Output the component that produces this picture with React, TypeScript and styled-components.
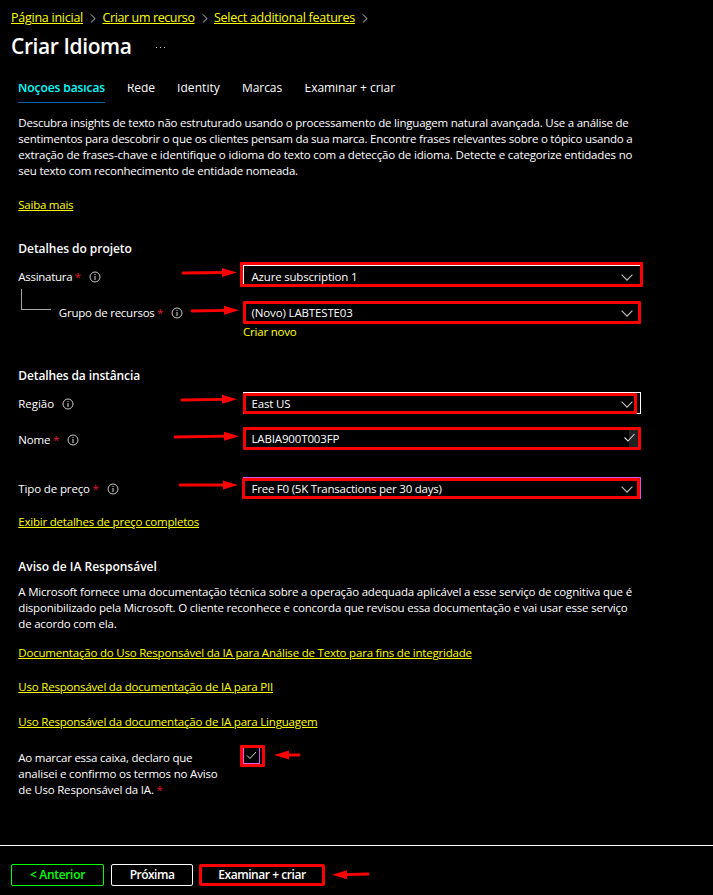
import React from 'react';
import styled, { createGlobalStyle } from 'styled-components';

const RED = '#ff0000';
const YELLOW = '#ffff00';

const GlobalStyle = createGlobalStyle`
  * { box-sizing: border-box; }
  body {
    margin: 0;
    background: #000;
    color: #fff;
    font-family: "Open Sans", "Noto Sans", sans-serif;
    font-size: 11.5px;
    line-height: 16px;
  }
`;

const Page = styled.div`
  width: 713px;
  height: 895px;
  display: flex;
  flex-direction: column;
  background: #000;
  overflow: hidden;
  white-space: nowrap;
`;

const Breadcrumb = styled.nav`
  display: flex;
  align-items: center;
  height: 34px;
  padding: 2px 0 0 11px;
  font-size: 12.5px;
  line-height: 18px;
`;

const Crumb = styled.a<{ $w: number; $ls: number }>`
  width: ${(p) => p.$w}px;
  letter-spacing: ${(p) => p.$ls}px;
  color: ${YELLOW};
  text-decoration: underline;
  text-decoration-thickness: 1px;
  text-underline-offset: 1px;
`;

const CrumbSeparator = styled.svg`
  width: 6px;
  height: 9px;
  margin: 0 6.5px 0 7px;
  flex: none;
`;

const TitleBar = styled.header`
  display: flex;
  height: 50px;
  padding-left: 11px;
`;

const Title = styled.h1`
  margin: -1px 0 0;
  width: 144px;
  font-size: 21px;
  font-weight: 600;
  line-height: 26px;
  letter-spacing: -0.4px;
`;

const More = styled.svg`
  width: 12px;
  height: 3px;
  margin-top: 12px;
`;

const Tabs = styled.div`
  display: flex;
  height: 19px;
  padding-left: 18px;
  overflow: hidden;
  font-size: 12px;
`;

const Tab = styled.div<{ $w: number; $gap: number; $ls: number; $active?: boolean }>`
  width: ${(p) => p.$w}px;
  height: 19px;
  margin-right: ${(p) => p.$gap}px;
  letter-spacing: ${(p) => p.$ls}px;
  font-weight: ${(p) => (p.$active ? 600 : 400)};
  color: ${(p) => (p.$active ? '#00ffff' : '#fff')};
  border-bottom: ${(p) => (p.$active ? '1px solid #0a64ad' : '0')};
`;

const TabText = styled.span`
  display: block;
  margin-top: -4px;
`;

const Main = styled.main`
  display: flex;
  flex-direction: column;
  align-items: flex-start;
  height: 742px;
  padding: 12px 0 0 18.3px;
`;

const Line = styled.div<{ $ls?: number; $mt?: number }>`
  letter-spacing: ${(p) => p.$ls ?? -0.2}px;
  margin-top: ${(p) => p.$mt ?? 0}px;
`;

const Heading = styled.h2<{ $ls?: number; $mt: number }>`
  margin: ${(p) => p.$mt}px 0 0;
  font-size: 12px;
  line-height: 16px;
  font-weight: 600;
  letter-spacing: ${(p) => p.$ls ?? 0}px;
`;

const Link = styled.a<{ $ls?: number; $mt: number }>`
  margin-top: ${(p) => p.$mt}px;
  color: ${YELLOW};
  letter-spacing: ${(p) => p.$ls ?? -0.2}px;
  text-decoration: underline;
  text-decoration-thickness: 1px;
  text-underline-offset: 1px;
`;

const FormRow = styled.div<{ $mt: number }>`
  display: flex;
  height: 22px;
  margin-top: ${(p) => p.$mt}px;
`;

const LabelCell = styled.div<{ $indent?: number; $drop?: number }>`
  position: relative;
  display: flex;
  align-items: flex-start;
  width: 224.7px;
  padding: ${(p) => 4 + (p.$drop ?? 0)}px 0 0 ${(p) => p.$indent ?? 0}px;
`;

const LabelText = styled.label<{ $ls: number }>`
  letter-spacing: ${(p) => p.$ls}px;
`;

const Star = styled.span<{ $gap?: number }>`
  color: #e8182f;
  margin-left: ${(p) => p.$gap ?? 2.5}px;
`;

const InfoSvg = styled.svg`
  width: 12px;
  height: 12px;
  margin: 2px 0 0 8px;
  flex: none;
`;

const Connector = styled.div`
  position: absolute;
  left: 3px;
  top: -12px;
  width: 30px;
  height: 21px;
  border-left: 1px solid #a6a6a6;
  border-bottom: 1px solid #a6a6a6;
`;

const Field = styled.div<{ $line: string }>`
  position: relative;
  display: flex;
  width: 398px;
  height: 22px;
  padding: 3px 0 0 7.5px;
  border: 1px solid ${(p) => p.$line};
`;

const Value = styled.span<{ $ls: number }>`
  flex: 1;
  letter-spacing: ${(p) => p.$ls}px;
`;

const Chevron = styled.svg`
  width: 12px;
  height: 7px;
  margin: 4.5px 7px 0 0;
`;

const ValidMark = styled.svg`
  width: 18px;
  height: 18px;
  margin: -2px 1px 0 0;
`;

const InlineAction = styled.span`
  color: ${YELLOW};
  letter-spacing: -0.2px;
`;

const Highlight = styled.div<{ $t: number; $r: number; $b: number; $l: number }>`
  position: absolute;
  top: ${(p) => p.$t}px;
  right: ${(p) => p.$r}px;
  bottom: ${(p) => p.$b}px;
  left: ${(p) => p.$l}px;
  border: 3px solid ${RED};
  border-radius: 1px;
`;

const ArrowSvg = styled.svg<{ $x: number; $y: number }>`
  position: absolute;
  left: ${(p) => p.$x}px;
  top: ${(p) => p.$y}px;
  overflow: visible;
`;

const ConsentRow = styled.div`
  display: flex;
  margin-top: 20px;
`;

const ConsentText = styled.div`
  width: 225.2px;
`;

const CheckBox = styled.div`
  position: relative;
  width: 17px;
  height: 17px;
  margin-top: -3px;
  border: 1px solid #d65cf0;
  display: flex;
  align-items: center;
  justify-content: center;
`;

const Footer = styled.footer`
  display: flex;
  height: 50px;
  padding: 18px 0 0 11px;
  border-top: 1px solid #fff;
`;

const Button = styled.button<{ $w: number; $color: string; $mr: number; $ls: number; $marked?: boolean }>`
  position: relative;
  width: ${(p) => p.$w}px;
  height: 22px;
  margin-right: ${(p) => p.$mr}px;
  padding: 0;
  background: #000;
  color: ${(p) => (p.$marked ? '#fff' : p.$color)};
  border: ${(p) => (p.$marked ? 3 : 1)}px solid ${(p) => p.$color};
  border-radius: 2px;
  font: 600 12px/14px "Open Sans", sans-serif;
  letter-spacing: ${(p) => p.$ls}px;
`;

const Info = () => (
  <InfoSvg viewBox="0 0 12 12" fill="none" stroke="#c8c8c8">
    <circle cx="6" cy="6" r="5" strokeWidth="1" />
    <path d="M6 5v4M6 3v1" strokeWidth="1.1" />
  </InfoSvg>
);

const Down = () => (
  <Chevron viewBox="0 0 12 7" fill="none" stroke="#c4c4c4" strokeWidth="1.1">
    <path d="M.6.7 6 6.1 11.4.7" />
  </Chevron>
);

const Separator = () => (
  <CrumbSeparator viewBox="0 0 6 9" fill="none" stroke="#c4c4c4" strokeWidth="1">
    <path d="M.8.3 5 4.5.8 8.7" />
  </CrumbSeparator>
);

// Pointer whose shaft runs from the local origin to its tip; flip makes it point left.
const Arrow = ({ x, y, length, rise = 0, flip = false }: { x: number; y: number; length: number; rise?: number; flip?: boolean }) => (
  <ArrowSvg $x={x} $y={y} width="1" height="1">
    <g transform={flip ? 'scale(-1 1)' : undefined}>
      <path d={`M1 0L${length - 13} ${-rise}`} stroke={RED} strokeWidth="2.8" strokeLinecap="round" />
      <path d={`M${length} ${-rise}L${length - 15} ${-rise - 4.5}V${-rise + 4.5}Z`} fill={RED} />
    </g>
  </ArrowSvg>
);

export default function App() {
  return (
    <Page>
      <GlobalStyle />
      <Breadcrumb>
        <Crumb $w={72} $ls={-0.25}>Página inicial</Crumb>
        <Separator />
        <Crumb $w={92} $ls={-0.39}>Criar um recurso</Crumb>
        <Separator />
        <Crumb $w={141} $ls={-0.26}>Select additional features</Crumb>
        <Separator />
      </Breadcrumb>
      <TitleBar>
        <Title>Criar Idioma</Title>
        <More viewBox="0 0 12 3" fill="#d0d0d0">
          <rect x="1" y="1" width="1" height="1" />
          <rect x="5" y="1" width="1" height="1" />
          <rect x="9" y="1" width="1" height="1" />
        </More>
      </TitleBar>
      <Tabs>
        <Tab $w={87} $gap={22} $ls={-0.09} $active><TabText>Noções básicas</TabText></Tab>
        <Tab $w={28} $gap={22} $ls={-0.05}><TabText>Rede</TabText></Tab>
        <Tab $w={43} $gap={22} $ls={0.07}><TabText>Identity</TabText></Tab>
        <Tab $w={40} $gap={22.5} $ls={-0.08}><TabText>Marcas</TabText></Tab>
        <Tab $w={91} $gap={0} $ls={-0.03}><TabText>Examinar + criar</TabText></Tab>
      </Tabs>
      <Main>
        <Line $ls={-0.22}>Descubra insights de texto não estruturado usando o processamento de linguagem natural avançada. Use a análise de</Line>
        <Line $ls={-0.24}>sentimentos para descobrir o que os clientes pensam da sua marca. Encontre frases relevantes sobre o tópico usando a</Line>
        <Line $ls={-0.15}>extração de frases-chave e identifique o idioma do texto com a detecção de idioma. Detecte e categorize entidades no</Line>
        <Line $ls={-0.215}>seu texto com reconhecimento de entidade nomeada.</Line>
        <Link $mt={18} $ls={-0.24}>Saiba mais</Link>

        <Heading $mt={28} $ls={-0.05}>Detalhes do projeto</Heading>
        <FormRow $mt={8}>
          <LabelCell>
            <LabelText $ls={-0.28}>Assinatura</LabelText><Star>*</Star><Info />
            <Arrow x={164} y={7.5} length={55} rise={0.5} />
          </LabelCell>
          <Field $line="#fff">
            <Value $ls={-0.19}>Azure subscription 1</Value><Down />
            <Highlight $t={-4} $r={-3} $b={-1} $l={-4} />
          </Field>
        </FormRow>
        <FormRow $mt={14}>
          <LabelCell $indent={40.5}>
            <Connector />
            <LabelText $ls={-0.24}>Grupo de recursos</LabelText><Star>*</Star><Info />
            <Arrow x={173} y={9.5} length={48} rise={0.7} />
          </LabelCell>
          <Field $line="transparent">
            <Value $ls={-0.14}>(Novo) LABTESTE03</Value><Down />
            <Highlight $t={-1} $r={-1} $b={-2} $l={-1} />
          </Field>
        </FormRow>
        <FormRow $mt={1}>
          <LabelCell />
          <InlineAction>Criar novo</InlineAction>
        </FormRow>

        <Heading $mt={22} $ls={-0.12}>Detalhes da instância</Heading>
        <FormRow $mt={8}>
          <LabelCell>
            <LabelText $ls={-0.05}>Região</LabelText><Info />
            <Arrow x={163} y={7.5} length={56} rise={0.7} />
          </LabelCell>
          <Field $line="#fff">
            <Value $ls={-0.15}>East US</Value><Down />
            <Highlight $t={0} $r={3} $b={-1} $l={-1} />
          </Field>
        </FormRow>
        <FormRow $mt={13}>
          <LabelCell $drop={1}>
            <LabelText $ls={-0.15}>Nome</LabelText><Star>*</Star><Info />
            <Arrow x={156} y={9.5} length={65} rise={0.8} />
          </LabelCell>
          <Field $line="transparent">
            <Value $ls={-0.15}>LABIA900T003FP</Value>
            <ValidMark viewBox="0 0 18 18">
              <rect x="8" width="9" height="18" fill="#222" />
              <path d="M3.5 8.5 7 12 13.5 5" fill="none" stroke="#d8d8d8" strokeWidth="1.1" />
            </ValidMark>
            <Highlight $t={-1} $r={-1} $b={-2} $l={-1} />
          </Field>
        </FormRow>
        <FormRow $mt={28}>
          <LabelCell>
            <LabelText $ls={-0.13}>Tipo de preço</LabelText><Star>*</Star><Info />
            <Arrow x={161} y={7.5} length={59} />
          </LabelCell>
          <Field $line="#c957e0">
            <Value $ls={-0.23}>Free F0 (5K Transactions per 30 days)</Value><Down />
            <Highlight $t={0} $r={0} $b={-1} $l={-2} />
          </Field>
        </FormRow>
        <Link $mt={15} $ls={-0.21}>Exibir detalhes de preço completos</Link>

        <Heading $mt={29}>Aviso de IA Responsável</Heading>
        <Line $mt={9} $ls={-0.19}>A Microsoft fornece uma documentação técnica sobre a operação adequada aplicável a esse serviço de cognitiva que é</Line>
        <Line $ls={-0.2}>disponibilizado pela Microsoft. O cliente reconhece e concorda que revisou essa documentação e vai usar esse serviço</Line>
        <Line>de acordo com ela.</Line>
        <Link $mt={13} $ls={-0.205}>Documentação do Uso Responsável da IA para Análise de Texto para fins de integridade</Link>
        <Link $mt={18}>Uso Responsável da documentação de IA para PII</Link>
        <Link $mt={19}>Uso Responsável da documentação de IA para Linguagem</Link>

        <ConsentRow>
          <ConsentText>
            <Line $ls={-0.24}>Ao marcar essa caixa, declaro que</Line>
            <Line $ls={-0.19}>analisei e confirmo os termos no Aviso</Line>
            <Line $ls={-0.19}>de Uso Responsável da IA. <Star $gap={0}>*</Star></Line>
          </ConsentText>
          <CheckBox>
            <svg width="11" height="9" viewBox="0 0 11 9" fill="none" stroke="#d8d8d8">
              <path d="M1 4.5 4 7.5 10 1" />
            </svg>
            <Highlight $t={-3} $r={-6} $b={-4} $l={-4} />
            <Arrow x={56} y={7} length={26} flip />
          </CheckBox>
        </ConsentRow>
      </Main>
      <Footer>
        <Button $w={93} $color="#00ff00" $mr={7} $ls={-0.32}>&lt; Anterior</Button>
        <Button $w={82} $color="#fff" $mr={6} $ls={-0.5}>Próxima</Button>
        <Button $w={126} $color={RED} $mr={0} $ls={-0.44} $marked>
          Examinar + criar
          <Arrow x={167} y={6.5} length={37} rise={-0.7} flip />
        </Button>
      </Footer>
    </Page>
  );
}
